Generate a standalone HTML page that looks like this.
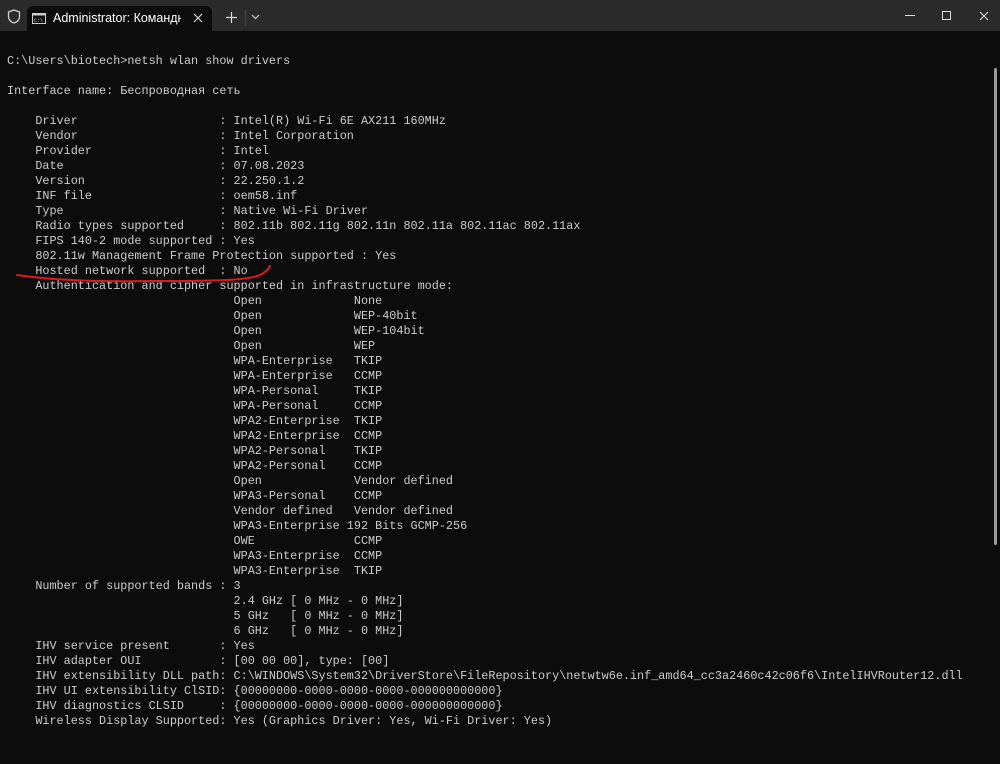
<!DOCTYPE html>
<html><head><meta charset="utf-8"><style>
html,body{margin:0;padding:0;width:1000px;height:764px;overflow:hidden;background:#0c0c0c;}
.title{position:absolute;left:0;top:0;width:1000px;height:31px;background:#2b2b2b;}
.tab{position:absolute;left:27px;top:6px;width:185px;height:25px;background:#0c0c0c;border-radius:6px 6px 0 0;}
.tabtext{position:absolute;left:53px;top:11px;font:12.5px "Liberation Sans","Noto Sans CJK SC",sans-serif;color:#fff;white-space:nowrap;width:128px;overflow:hidden;}
pre{position:absolute;left:7px;top:54px;margin:0;font-family:"Liberation Mono",monospace;font-size:11.8px;line-height:15px;color:#cccccc;}
.sb{position:absolute;left:994px;top:68px;width:3px;height:477px;background:#9a9a9a;border-radius:2px;}
</style></head><body>
<div class="title">
<svg style="position:absolute;left:7px;top:9px" width="14" height="15" viewBox="0 0 14 15"><path d="M7 1 L12.5 3 V7.5 C12.5 11 10 13 7 14 C4 13 1.5 11 1.5 7.5 V3 Z" fill="none" stroke="#cfcfcf" stroke-width="1.3"/></svg>
<div class="tab"></div>
<svg style="position:absolute;left:32px;top:13px" width="14" height="11" viewBox="0 0 14 11"><rect x="0.5" y="0.5" width="13" height="10" fill="#111" stroke="#ccc"/><rect x="0.5" y="0.5" width="13" height="2" fill="#ccc"/><text x="2" y="9" font-size="5" fill="#ccc" font-family="Liberation Mono">C:\</text></svg>
<div class="tabtext">Administrator: Командная строка</div>
<svg style="position:absolute;left:193px;top:13px" width="10" height="10"><path d="M1 1L9 9M9 1L1 9" stroke="#ddd" stroke-width="1.2"/></svg>
<svg style="position:absolute;left:226px;top:12px" width="11" height="11"><path d="M5.5 0V11M0 5.5H11" stroke="#ddd" stroke-width="1.2"/></svg>
<div style="position:absolute;left:245px;top:10px;width:1px;height:16px;background:#444"></div>
<svg style="position:absolute;left:251px;top:14px" width="9" height="6"><path d="M1 1L4.5 4.5L8 1" stroke="#ccc" fill="none" stroke-width="1.2"/></svg>
<div style="position:absolute;left:905px;top:15px;width:10px;height:1px;background:#ddd"></div>
<div style="position:absolute;left:942px;top:11px;width:7px;height:7px;border:1px solid #ddd"></div>
<svg style="position:absolute;left:979px;top:11px" width="10" height="10"><path d="M1 1L9 9M9 1L1 9" stroke="#ddd" stroke-width="1.1"/></svg>
</div>
<pre>C:\Users\biotech&gt;netsh wlan show drivers

Interface name: Беспроводная сеть

    Driver                    : Intel(R) Wi-Fi 6E AX211 160MHz
    Vendor                    : Intel Corporation
    Provider                  : Intel
    Date                      : 07.08.2023
    Version                   : 22.250.1.2
    INF file                  : oem58.inf
    Type                      : Native Wi-Fi Driver
    Radio types supported     : 802.11b 802.11g 802.11n 802.11a 802.11ac 802.11ax
    FIPS 140-2 mode supported : Yes
    802.11w Management Frame Protection supported : Yes
    Hosted network supported  : No
    Authentication and cipher supported in infrastructure mode:
                                Open             None
                                Open             WEP-40bit
                                Open             WEP-104bit
                                Open             WEP
                                WPA-Enterprise   TKIP
                                WPA-Enterprise   CCMP
                                WPA-Personal     TKIP
                                WPA-Personal     CCMP
                                WPA2-Enterprise  TKIP
                                WPA2-Enterprise  CCMP
                                WPA2-Personal    TKIP
                                WPA2-Personal    CCMP
                                Open             Vendor defined
                                WPA3-Personal    CCMP
                                Vendor defined   Vendor defined
                                WPA3-Enterprise 192 Bits GCMP-256
                                OWE              CCMP
                                WPA3-Enterprise  CCMP
                                WPA3-Enterprise  TKIP
    Number of supported bands : 3
                                2.4 GHz [ 0 MHz - 0 MHz]
                                5 GHz   [ 0 MHz - 0 MHz]
                                6 GHz   [ 0 MHz - 0 MHz]
    IHV service present       : Yes
    IHV adapter OUI           : [00 00 00], type: [00]
    IHV extensibility DLL path: C:\WINDOWS\System32\DriverStore\FileRepository\netwtw6e.inf_amd64_cc3a2460c42c06f6\IntelIHVRouter12.dll
    IHV UI extensibility ClSID: {00000000-0000-0000-0000-000000000000}
    IHV diagnostics CLSID     : {00000000-0000-0000-0000-000000000000}
    Wireless Display Supported: Yes (Graphics Driver: Yes, Wi-Fi Driver: Yes)</pre>
<svg style="position:absolute;left:0;top:0" width="1000" height="764"><path d="M17 275 C50 280 90 282 150 281 C210 281 250 281 262 274 C267 271 269 268 270 266" fill="none" stroke="#e0191e" stroke-width="2" stroke-linecap="round"/></svg>
<div class="sb"></div>
</body></html>
